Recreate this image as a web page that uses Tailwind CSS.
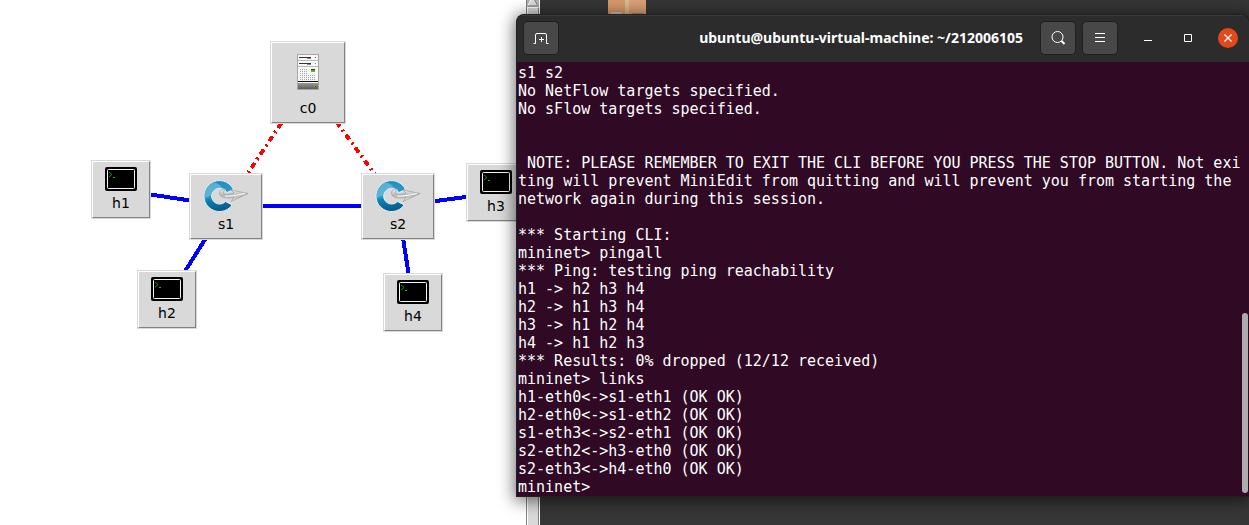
<!DOCTYPE html>
<html lang="en">
<head>
<meta charset="utf-8">
<title>MiniEdit</title>
<script src="https://cdn.jsdelivr.net/npm/@tailwindcss/browser@4"></script>
</head>
<body class="relative h-screen overflow-hidden bg-[#363636] font-['DejaVu_Sans',sans-serif]">

<!-- Symbols shared by the nodes -->
<svg class="absolute size-0" aria-hidden="true">
  <defs>
    <linearGradient id="ring" x1="0" y1="0" x2="0.2" y2="1">
      <stop offset="0" stop-color="#1587b5"/><stop offset="0.25" stop-color="#2593c1"/>
      <stop offset="0.55" stop-color="#2a98c6"/><stop offset="0.65" stop-color="#0e7fb0"/><stop offset="1" stop-color="#045e8e"/>
    </linearGradient>
    <linearGradient id="arrow" x1="0" y1="0" x2="0" y2="1">
      <stop offset="0" stop-color="#fafafa"/><stop offset="0.5" stop-color="#b5b5b5"/><stop offset="1" stop-color="#ededed"/>
    </linearGradient>
    <linearGradient id="base" x1="0" y1="0" x2="0" y2="1">
      <stop offset="0" stop-color="#999"/><stop offset="1" stop-color="#5c5c5c"/>
    </linearGradient>
    <symbol id="host" viewBox="0 0 32 24">
      <rect width="32" height="24" rx="2" fill="#000"/>
      <rect x="2.5" y="2.5" width="27" height="19" rx="1" fill="#000" stroke="#f4f4f4"/>
      <path d="M4 5l3 2.500-3 2.500" fill="none" stroke="#0b8f12"/>
      <path d="M8 10.500h2" stroke="#18b31f"/>
    </symbol>
    <symbol id="switch" viewBox="0 0 46 34">
      <path d="M30.500 10.500A15.500 15.500 0 1 0 29.200 25.900L22.500 22.500A8 8 0 1 1 23.800 13.600Z" fill="url(#ring)" stroke="#e6eef2"/>
      <path d="M1.500 19A15 15 0 0 1 10 3.500Q17 4 19 9.200A8 8 0 0 0 8.500 16.500Q5 17 1.500 19Z" fill="#8fd0ea" opacity=".5"/>
      <path d="M23 10Q16 10 16.500 15Q18 19.500 27 19L31 18.500L28 22.500L45 14.500L28 11L31 14Q22 16.500 20 14Q20 11.500 23 10Z" fill="url(#arrow)" stroke="#929292" stroke-width=".6"/>
      <path d="M22 17Q29 17.500 42 14.500" fill="none" stroke="#fff"/>
    </symbol>
    <symbol id="controller" viewBox="0 0 22 36">
      <rect x=".5" y=".5" width="21" height="35" fill="#f7f7f7" stroke="#a6a6a6"/>
      <path d="M1 6.500h20M1 12.500h20" stroke="#bbb"/>
      <path d="M2 3.500h12M2 9.500h12" stroke="#333"/><path d="M10 4.500h4M10 10.500h4" stroke="#888"/>
      <path d="M18 3.500h1" stroke="#d11"/><path d="M18 9.500h1" stroke="#5b3"/>
      <path d="M3 15.500h7M3 17.500h7M3 19.500h7M3 21.500h16M3 23.500h16M3 25.500h16" stroke="#a4a4a4" stroke-dasharray="1 1"/>
      <rect x="14" y="15" width="4" height="1" fill="#333"/><rect x="14" y="16" width="4" height="2" fill="#58b80a"/>
      <path d="M1 27.500h20" stroke="#111"/>
      <rect x="1" y="29" width="20" height="6" fill="url(#base)"/>
      <rect x="17" y="31" width="2" height="2" fill="#58c80a"/><rect x="18" y="32" width="1" height="1" fill="#c22"/>
    </symbol>
  </defs>
</svg>

<!-- Topology canvas with its scroll bar -->
<main class="flex h-full w-[540px] bg-white">
  <section class="relative flex-1" aria-label="Network topology">
    <svg class="absolute inset-0 size-full" fill="none" stroke-width="4" shape-rendering="crispEdges" aria-hidden="true">
      <path d="M121 190L226 206L398 206L496 193M226 206L167 300M398 206L413 302" stroke="#00f"/>
      <path d="M308 83L226 206M308 83L398 206" stroke="#f00" stroke-dasharray="6 4 2 4"/>
    </svg>

    <button class="absolute top-[41px] left-[270px] h-[83px] w-[76px] border border-[#d9d9d9] bg-[#d9d9d9] text-sm">
      <span class="flex size-full flex-col items-center gap-2 border border-t-white border-r-[#828282] border-b-[#828282] border-l-white pt-[11px]">
        <svg class="h-9 w-[22px]" shape-rendering="crispEdges"><use href="#controller"/></svg>c0</span>
    </button>
    <button class="absolute top-[173px] left-[189px] h-[67px] w-[74px] border border-[#d9d9d9] bg-[#d9d9d9] text-sm">
      <span class="flex size-full flex-col items-center gap-px border border-t-white border-r-[#828282] border-b-[#828282] border-l-white pt-1">
        <svg class="h-[34px] w-[46px]"><use href="#switch"/></svg>s1</span>
    </button>
    <button class="absolute top-[173px] left-[361px] h-[67px] w-[74px] border border-[#d9d9d9] bg-[#d9d9d9] text-sm">
      <span class="flex size-full flex-col items-center gap-px border border-t-white border-r-[#828282] border-b-[#828282] border-l-white pt-1">
        <svg class="h-[34px] w-[46px]"><use href="#switch"/></svg>s2</span>
    </button>
    <button class="absolute top-[160px] left-[91px] h-[59px] w-[60px] border border-[#d9d9d9] bg-[#d9d9d9] text-sm">
      <span class="flex size-full flex-col items-center gap-[2px] border border-t-white border-r-[#828282] border-b-[#828282] border-l-white pt-[5px]">
        <svg class="h-6 w-8"><use href="#host"/></svg>h1</span>
    </button>
    <button class="absolute top-[270px] left-[137px] h-[59px] w-[60px] border border-[#d9d9d9] bg-[#d9d9d9] text-sm">
      <span class="flex size-full flex-col items-center gap-[2px] border border-t-white border-r-[#828282] border-b-[#828282] border-l-white pt-[5px]">
        <svg class="h-6 w-8"><use href="#host"/></svg>h2</span>
    </button>
    <button class="absolute top-[163px] left-[466px] h-[59px] w-[60px] border border-[#d9d9d9] bg-[#d9d9d9] text-sm">
      <span class="flex size-full flex-col items-center gap-[2px] border border-t-white border-r-[#828282] border-b-[#828282] border-l-white pt-[5px]">
        <svg class="h-6 w-8"><use href="#host"/></svg>h3</span>
    </button>
    <button class="absolute top-[273px] left-[383px] h-[59px] w-[60px] border border-[#d9d9d9] bg-[#d9d9d9] text-sm">
      <span class="flex size-full flex-col items-center gap-[2px] border border-t-white border-r-[#828282] border-b-[#828282] border-l-white pt-[5px]">
        <svg class="h-6 w-8"><use href="#host"/></svg>h4</span>
    </button>
  </section>
  <div class="flex w-[14px] flex-col border-x border-l-[#828282] border-r-white bg-[#d9d9d9]">
    <svg class="h-[7px] w-3" viewBox="0 0 12 7" aria-hidden="true"><rect width="12" height="7" fill="#b3b3b3"/><path d="M1 5.500L5.500-3L11 5.500Z" fill="#d9d9d9"/><path d="M5.500-3L1 5.500" stroke="#fff"/><path d="M1 6h10L6-3" fill="none" stroke="#828282"/></svg>
    <div class="flex-1 border border-b-0 border-t-white border-r-[#828282] border-l-white"></div>
  </div>
</main>

<!-- Desktop folder icon behind the terminal -->
<svg class="absolute top-0 left-[608px] h-[14px] w-[38px]" viewBox="0 0 38 14" aria-hidden="true">
  <rect width="38" height="14" fill="#d9a27a"/><rect width="17" height="14" fill="#d99a6c"/>
  <rect x="17" width="4" height="14" fill="#d8bc8c"/><rect x="3" y="12" width="11" height="2" fill="#c9c4c0"/><rect x="24" y="13" width="11" height="1" fill="#b88460"/>
</svg>

<!-- Terminal window -->
<section class="absolute top-[14px] right-0 left-[516px] flex h-[483px] flex-col overflow-hidden rounded-t-lg border border-r-0 border-[#202020] bg-[#300a24] shadow-[0_2px_16px_2px_rgba(0,0,0,0.55)]" aria-label="Terminal">
  <header class="flex h-[47px] shrink-0 items-center border-t border-[#3b3b3b] bg-[#2c2c2c] pr-[11px] pb-[2px] pl-[7px] text-white">
    <button class="flex h-8 w-[34px] items-center justify-center rounded-sm bg-[#484848] ring-1 ring-[#202020]" aria-label="New tab">
      <svg class="size-4" viewBox="0 0 16 16" fill="none" stroke="#fff"><path d="M.500 13.500H2.500V5Q2.500 3.500 4 3.500H12Q13.500 3.500 13.500 5V13.500H15.500M8.500 7v5M6 9.500h5"/></svg>
    </button>
    <h1 class="min-w-0 flex-1 pr-[18px] text-right font-['Noto_Sans',sans-serif] text-sm font-bold whitespace-nowrap">ubuntu@ubuntu-virtual-machine: ~/212006105</h1>
    <div class="flex items-center gap-2">
      <button class="flex h-8 w-[34px] items-center justify-center rounded-sm bg-[#484848] ring-1 ring-[#202020]" aria-label="Search">
        <svg class="size-4" viewBox="0 0 16 16" fill="none" stroke="#fff"><circle cx="7.500" cy="7" r="5.500"/><path d="M11.500 11l3 3" stroke-width="2"/></svg>
      </button>
      <button class="flex h-8 w-[34px] items-center justify-center rounded-sm bg-[#484848] ring-1 ring-[#202020]" aria-label="Menu">
        <svg class="size-4" viewBox="0 0 16 16" stroke="#fff"><path d="M3 3.500h10M3 7.500h10M3 11.500h10"/></svg>
      </button>
    </div>
    <div class="flex items-center gap-5 pl-[21px]">
      <button class="flex size-5 items-center justify-center" aria-label="Minimize"><svg class="size-4" viewBox="0 0 16 16" stroke="#fff"><path d="M4 10.500h8"/></svg></button>
      <button class="flex size-5 items-center justify-center" aria-label="Maximize"><svg class="size-4" viewBox="0 0 16 16" fill="none" stroke="#fff"><path d="M4.500 4.500h7v7h-7z"/></svg></button>
      <button class="flex size-5 items-center justify-center rounded-full bg-[#e2491a]" aria-label="Close"><svg class="size-4" viewBox="0 0 16 16" stroke="#fff" stroke-width="1.300"><path d="M4.500 4.500l7 7M11.500 4.500l-7 7"/></svg></button>
    </div>
  </header>
  <div class="flex min-h-0 flex-1 pr-px">
    <pre class="min-w-0 flex-1 overflow-hidden pt-[2px] pl-px font-['DejaVu_Sans_Mono',monospace] text-[15px] leading-[18px] text-white">s1 s2
No NetFlow targets specified.
No sFlow targets specified.


 NOTE: PLEASE REMEMBER TO EXIT THE CLI BEFORE YOU PRESS THE STOP BUTTON. Not exi
ting will prevent MiniEdit from quitting and will prevent you from starting the
network again during this session.

*** Starting CLI:
mininet&gt; pingall
*** Ping: testing ping reachability
h1 -&gt; h2 h3 h4
h2 -&gt; h1 h3 h4
h3 -&gt; h1 h2 h4
h4 -&gt; h1 h2 h3
*** Results: 0% dropped (12/12 received)
mininet&gt; links
h1-eth0&lt;-&gt;s1-eth1 (OK OK)
h2-eth0&lt;-&gt;s1-eth2 (OK OK)
s1-eth3&lt;-&gt;s2-eth1 (OK OK)
s2-eth2&lt;-&gt;h3-eth0 (OK OK)
s2-eth3&lt;-&gt;h4-eth0 (OK OK)
mininet&gt; </pre>
    <div class="flex w-[6px] items-end pb-[3px]"><div class="h-[180px] w-full rounded-full bg-[#acacac]"></div></div>
  </div>
</section>
</body>
</html>
